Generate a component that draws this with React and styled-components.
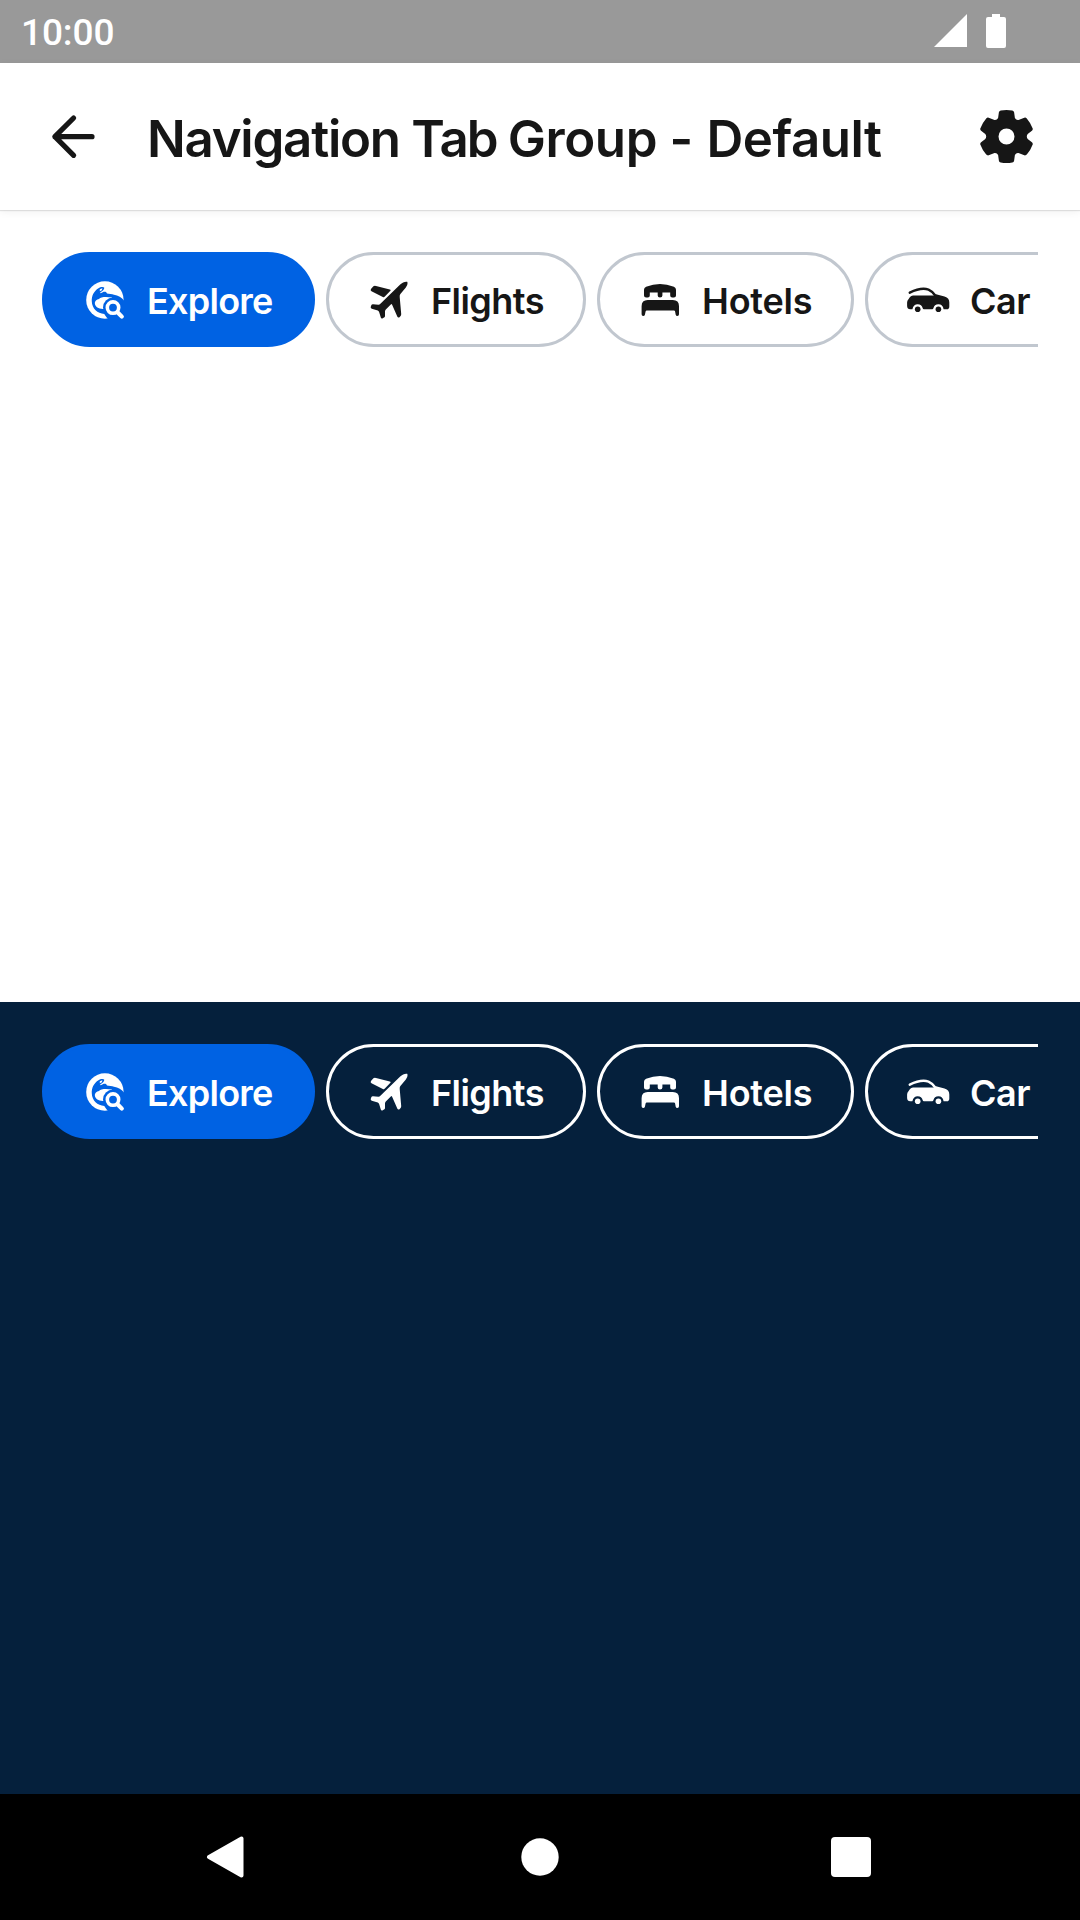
import React from 'react';
import styled, { createGlobalStyle } from 'styled-components';

const GlobalStyle = createGlobalStyle`
  *, *::before, *::after { box-sizing: border-box; }
  body { margin: 0; background: #fff; font-family: Inter, "Liberation Sans", sans-serif; }
  svg { display: block; flex: none; }
`;

const Screen = styled.div`
  width: 1080px;
  height: 1920px;
  display: flex;
  flex-direction: column;
  overflow: hidden;
  color: #161616;
`;

const StatusBar = styled.div`
  height: 63px;
  flex: none;
  display: flex;
  align-items: center;
  justify-content: space-between;
  padding: 0 74px 0 21px;
  background: #999;
  color: #fff;
`;

const Clock = styled.span`
  padding-top: 3px;
  font: 500 37px/44px Roboto, sans-serif;
  letter-spacing: -0.1px;
`;

const StatusIcons = styled.div`
  display: flex;
  gap: 19px;
`;

const Header = styled.header`
  height: 147px;
  flex: none;
  display: flex;
  align-items: center;
  padding: 0 42px;
  background: #fff;
  box-shadow: 0 1px 1px rgba(0, 0, 0, 0.1), 0 2px 8px rgba(0, 0, 0, 0.06);
`;

const Title = styled.h1`
  flex: 1;
  margin: 0 0 0 42px;
  padding-top: 5px;
  font-size: 51px;
  font-weight: 600;
  line-height: 64px;
  white-space: pre;
`;

const Word = styled.span`
  letter-spacing: ${(p) => p.$tracking}px;
`;

const Panel = styled.section`
  flex: none;
  height: 792px;
  padding: 42px;
  background: ${(p) => (p.$dark ? '#05203c' : 'transparent')};
  color: ${(p) => (p.$dark ? '#fff' : '#161616')};
`;

const TabRow = styled.div`
  display: flex;
  gap: 11px;
  overflow: hidden;
`;

const Tab = styled.button`
  flex: none;
  width: ${(p) => p.$width}px;
  height: 95px;
  display: flex;
  align-items: center;
  gap: 21px;
  padding: 0 0 0 39px;
  border: 3px solid ${(p) => (p.$selected ? '#0062e3' : p.$dark ? '#fff' : '#c1c7cf')};
  border-radius: 48px;
  background: ${(p) => (p.$selected ? '#0062e3' : 'transparent')};
  color: ${(p) => (p.$selected ? '#fff' : 'inherit')};
  font-family: inherit;
`;

const TabLabel = styled.span`
  padding-top: 3px;
  font-size: 36px;
  font-weight: 600;
  line-height: 48px;
  letter-spacing: ${(p) => p.$tracking}px;
  white-space: nowrap;
`;

const NavBar = styled.nav`
  flex: 1;
  display: flex;
  align-items: center;
  justify-content: space-between;
  padding: 0 209px 0 206px;
  background: #000;
`;

const Icon = ({ children }) => (
  <svg width="42" height="42" viewBox="0 0 42 42" fill="currentColor" overflow="visible">{children}</svg>
);

const ExploreIcon = () => (
  <Icon>
    <circle cx="20.9" cy="21" r="18.7" />
    <path fill="#0062e3" d="M14.5 9.3C16 7.8 19.5 7.4 20.2 8.6C20.6 10.5 18.8 12 16.3 13.2C16 14.8 17.5 14.2 19 13C21 12.2 22.5 12.8 23 14.4C25 14.9 28 14.9 30 15.7C34 16.5 38 18.5 40 21.5V41H25C22 38 21 36 20.3 35C13.5 34.5 8 29.5 7.8 22.5C7.4 17 10 12 14.5 9.3Z" />
    <path d="M10.9 24.8C10.5 22 12.8 20.3 15 19.9C16.8 17.6 23 17.4 28 18.6L28 30H18.8C14.3 29.6 11.4 28 10.9 24.8ZM15.8 10.3L18.4 9.3L17.8 11.2L15.8 12.2Z" />
    <circle cx="29" cy="28.6" r="10" fill="#0062e3" />
    <circle cx="29" cy="28.6" r="5.7" fill="none" stroke="currentColor" strokeWidth="3.6" />
    <path d="M33.5 33.2L37.8 37.6" stroke="currentColor" strokeWidth="4.2" strokeLinecap="round" />
  </Icon>
);

const FlightIcon = () => (
  <Icon>
    <path d="M5.4 7.2Q6.4 6.6 8 7L21.8 10.4Q23.4 10.8 22.4 11.8L16.6 17.8Q15.8 18.5 14.8 18L3.5 12.2Q2 11.3 3 10Z" />
    <path d="M32.2 5.6C34.2 3.6 37.5 2.1 39.2 2.8C40.2 4.5 38.8 7.8 36.8 9.8L32.4 15Q31.5 16.2 31.7 18L33.2 35Q33.3 36.2 32.4 37.2L31.2 38.4Q30 39 29.4 37.8L24 25.6Q23.6 24.7 22.8 25.4L17.8 30.6Q17 31.5 17 32.5L17 37Q17 38 16 38.6L14.4 39.5Q13.2 39.9 12.8 38.6L11.2 33.2Q10.9 31.9 9.8 31.4L3.8 29.7Q2.5 29.2 2.7 28L3.2 26.4Q3.6 25.3 5 25.3L10.4 25.7Q11.6 25.7 12.4 24.8Z" />
  </Icon>
);

const HotelIcon = () => (
  <Icon>
    <path d="M5 16.4V10.7Q5 8.5 7.1 7.7Q21 2.4 34.9 7.7Q37 8.5 37 10.7V16.4Q37 18.5 34.9 18.5H33.2Q31.2 18.5 31.2 16.5V13.4H23.4V16.5Q23.4 18.6 21 18.6Q18.7 18.6 18.7 16.5V13.4H10.8V16.5Q10.8 18.5 8.8 18.5H7.1Q5 18.5 5 16.4Z" />
    <path d="M8.7 21H33.8Q40 21 40 27.2V35.3Q40 37 38.4 37Q37 37 36.7 35.7L36.1 32.5Q35.9 31.5 34.9 31.5H7.8Q6.8 31.5 6.6 32.5L5.9 35.7Q5.5 37 4.2 37Q2.6 37 2.6 35.3V27.2Q2.6 21 8.7 21Z" />
  </Icon>
);

const CarIcon = () => (
  <Icon>
    <path d="M2.8 13.6Q14 8.2 21.5 10.6Q25.2 12.2 28.2 16.4" fill="none" stroke="currentColor" strokeWidth="2.5" strokeLinecap="round" />
    <path d="M6 16.4H27L29 15.3L37.5 17.4C41 18.3 42.3 20.4 42.3 23.5V27.4Q42.3 30.2 39.8 30.2H36.6Q35.8 25.2 31.4 25.2Q27.3 25.2 26.4 29.3Q26.1 30.2 25.2 30.2H16.9Q16 30.2 15.7 29.3Q14.7 25.2 10.7 25.2Q6.5 25.2 5.4 30.2H3.2Q.3 30.2 .1 27V23.5Q.2 21.8 1.3 20.6L3 18Q4.2 16.4 6 16.4Z" />
    <circle cx="10.7" cy="30.2" r="2.8" />
    <circle cx="31.4" cy="30.2" r="2.8" />
  </Icon>
);

const TABS = [
  { label: 'Explore', icon: ExploreIcon, width: 273, tracking: -0.75, selected: true },
  { label: 'Flights', icon: FlightIcon, width: 260, tracking: -0.55 },
  { label: 'Hotels', icon: HotelIcon, width: 257, tracking: -0.2 },
  { label: 'Car', icon: CarIcon, width: 280, tracking: -0.5 },
];

const NavigationTabs = ({ dark }) => (
  <TabRow>
    {TABS.map(({ label, icon: Glyph, width, tracking, selected }) => (
      <Tab key={label} $width={width} $selected={selected} $dark={dark}>
        <Glyph />
        <TabLabel $tracking={tracking}>{label}</TabLabel>
      </Tab>
    ))}
  </TabRow>
);

export default function App() {
  return (
    <Screen>
      <GlobalStyle />
      <StatusBar>
        <Clock>10:00</Clock>
        <StatusIcons>
          <svg width="33" height="35" viewBox="0 0 33 35"><path d="M0 33L33 0V33Z" fill="#fff" /></svg>
          <svg width="20" height="35" viewBox="0 0 20 35"><path d="M6 0H14V3H18Q20 3 20 5V32Q20 34 18 34H2Q0 34 0 32V5Q0 3 2 3H6Z" fill="#fff" /></svg>
        </StatusIcons>
      </StatusBar>
      <Header>
        <svg width="63" height="63" viewBox="0 0 63 63" fill="none" stroke="#161616" strokeWidth="5.2" strokeLinecap="round" strokeLinejoin="round">
          <path d="M50 31.7H13M31.6 13L12.9 31.7L31.6 50.3" />
        </svg>
        <Title>
          <Word $tracking={-1.25}>{'Navigation '}</Word>
          <Word $tracking={-1.9}>{'Tab '}</Word>
          <Word $tracking={-0.4}>{'Group '}</Word>
          <Word $tracking={0.2}>{'- '}</Word>
          <Word $tracking={-0.5}>Default</Word>
        </Title>
        <svg width="63" height="63" viewBox="-31.5 -31.5 63 63" fill="#161616">
          <path fillRule="evenodd" d="M-5.8 -26.1Q0 -27.1 5.8 -26.1Q7.4 -25.7 7.6 -24.2L8.4 -18.5Q9.5 -16.3 12 -16.6L17.8 -18.8Q19.2 -19.2 20.3 -18.1Q24.3 -13.4 26.2 -8.1Q26.5 -6.7 25.4 -5.8L21.2 -2.5Q19.4 0 21.2 2.5L25.4 5.8Q26.5 6.7 26.2 8.1Q24.3 13.4 20.3 18.1Q19.2 19.2 17.8 18.8L12 16.6Q9.5 16.3 8.4 18.5L7.6 24.2Q7.4 25.7 5.8 26.1Q0 27.1 -5.8 26.1Q-7.4 25.7 -7.6 24.2L-8.4 18.5Q-9.5 16.3 -12 16.6L-17.8 18.8Q-19.2 19.2 -20.3 18.1Q-24.3 13.4 -26.2 8.1Q-26.5 6.7 -25.4 5.8L-21.2 2.5Q-19.4 0 -21.2 -2.5L-25.4 -5.8Q-26.5 -6.7 -26.2 -8.1Q-24.3 -13.4 -20.3 -18.1Q-19.2 -19.2 -17.8 -18.8L-12 -16.6Q-9.5 -16.3 -8.4 -18.5L-7.6 -24.2Q-7.4 -25.7 -5.8 -26.1ZM0 -8A8 8 0 1 0 0 8A8 8 0 1 0 0 -8Z" />
        </svg>
      </Header>
      <Panel>
        <NavigationTabs />
      </Panel>
      <Panel $dark>
        <NavigationTabs dark />
      </Panel>
      <NavBar>
        <svg width="42" height="42" viewBox="0 0 42 42"><path d="M35.5 2.5V39.5L3 21Z" fill="#fff" stroke="#fff" strokeWidth="4" strokeLinejoin="round" /></svg>
        <svg width="38" height="38" viewBox="0 0 38 38"><circle cx="19" cy="19" r="18.7" fill="#fff" /></svg>
        <svg width="40" height="40" viewBox="0 0 40 40"><rect width="40" height="40" rx="4" fill="#fff" /></svg>
      </NavBar>
    </Screen>
  );
}
